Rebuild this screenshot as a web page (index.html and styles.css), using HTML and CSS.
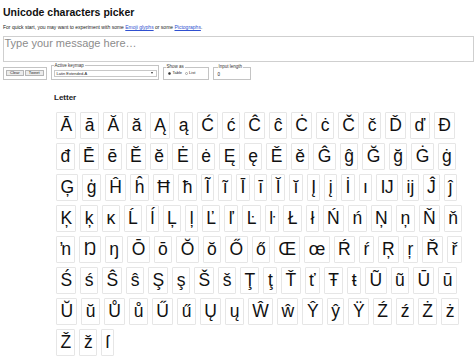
FILE: index.html
```html
<!DOCTYPE html>
<html lang="en">
<head>
<meta charset="utf-8">
<title>Unicode characters picker</title>
<link rel="stylesheet" href="styles.css">
</head>
<body>
<header class="intro">
  <h1 class="title">Unicode characters picker</h1>
  <p class="lead">For quick start, you may want to experiment with some <a href="#">Emoji glyphs</a> or some <a href="#">Pictographs</a>.</p>
</header>
<textarea class="message" placeholder="Type your message here…"></textarea>
<form class="controls">
  <fieldset class="group actions">
    <button type="button" class="btn">Clear</button><button type="button" class="btn">Tweet</button>
  </fieldset>
  <fieldset class="group keymap">
    <legend>Active keymap</legend>
    <div class="select"><span>Latin Extended-A</span><span class="arrow"></span></div>
  </fieldset>
  <fieldset class="group view">
    <legend>Show as</legend>
    <label class="opt"><input type="radio" name="view" checked>Table</label>
    <label class="opt"><input type="radio" name="view">List</label>
  </fieldset>
  <fieldset class="group length">
    <legend>Input length</legend>
    <span class="count">0</span>
  </fieldset>
</form>
<section class="category">
  <h2 class="cat-title">Letter</h2>
  <div class="chars">
    <div class="row"><span class="char">Ā</span><span class="char">ā</span><span class="char">Ă</span><span class="char">ă</span><span class="char">Ą</span><span class="char">ą</span><span class="char">Ć</span><span class="char">ć</span><span class="char">Ĉ</span><span class="char">ĉ</span><span class="char">Ċ</span><span class="char">ċ</span><span class="char">Č</span><span class="char">č</span><span class="char">Ď</span><span class="char">ď</span><span class="char">Đ</span></div>
    <div class="row"><span class="char">đ</span><span class="char">Ē</span><span class="char">ē</span><span class="char">Ĕ</span><span class="char">ĕ</span><span class="char">Ė</span><span class="char">ė</span><span class="char">Ę</span><span class="char">ę</span><span class="char">Ě</span><span class="char">ě</span><span class="char">Ĝ</span><span class="char">ĝ</span><span class="char">Ğ</span><span class="char">ğ</span><span class="char">Ġ</span><span class="char">ġ</span></div>
    <div class="row"><span class="char">Ģ</span><span class="char">ģ</span><span class="char">Ĥ</span><span class="char">ĥ</span><span class="char">Ħ</span><span class="char">ħ</span><span class="char">Ĩ</span><span class="char">ĩ</span><span class="char">Ī</span><span class="char">ī</span><span class="char">Ĭ</span><span class="char">ĭ</span><span class="char">Į</span><span class="char">į</span><span class="char">İ</span><span class="char">ı</span><span class="char">Ĳ</span><span class="char">ĳ</span><span class="char">Ĵ</span><span class="char">ĵ</span></div>
    <div class="row"><span class="char">Ķ</span><span class="char">ķ</span><span class="char">ĸ</span><span class="char">Ĺ</span><span class="char">ĺ</span><span class="char">Ļ</span><span class="char">ļ</span><span class="char">Ľ</span><span class="char">ľ</span><span class="char">Ŀ</span><span class="char">ŀ</span><span class="char">Ł</span><span class="char">ł</span><span class="char">Ń</span><span class="char">ń</span><span class="char">Ņ</span><span class="char">ņ</span><span class="char">Ň</span><span class="char">ň</span></div>
    <div class="row"><span class="char">ŉ</span><span class="char">Ŋ</span><span class="char">ŋ</span><span class="char">Ō</span><span class="char">ō</span><span class="char">Ŏ</span><span class="char">ŏ</span><span class="char">Ő</span><span class="char">ő</span><span class="char">Œ</span><span class="char">œ</span><span class="char">Ŕ</span><span class="char">ŕ</span><span class="char">Ŗ</span><span class="char">ŗ</span><span class="char">Ř</span><span class="char">ř</span></div>
    <div class="row"><span class="char">Ś</span><span class="char">ś</span><span class="char">Ŝ</span><span class="char">ŝ</span><span class="char">Ş</span><span class="char">ş</span><span class="char">Š</span><span class="char">š</span><span class="char">Ţ</span><span class="char">ţ</span><span class="char">Ť</span><span class="char">ť</span><span class="char">Ŧ</span><span class="char">ŧ</span><span class="char">Ũ</span><span class="char">ũ</span><span class="char">Ū</span><span class="char">ū</span></div>
    <div class="row"><span class="char">Ŭ</span><span class="char">ŭ</span><span class="char">Ů</span><span class="char">ů</span><span class="char">Ű</span><span class="char">ű</span><span class="char">Ų</span><span class="char">ų</span><span class="char">Ŵ</span><span class="char">ŵ</span><span class="char">Ŷ</span><span class="char">ŷ</span><span class="char">Ÿ</span><span class="char">Ź</span><span class="char">ź</span><span class="char">Ż</span><span class="char">ż</span></div>
    <div class="row"><span class="char">Ž</span><span class="char">ž</span><span class="char">ſ</span></div>
  </div>
</section>
</body>
</html>
```

FILE: styles.css
```css
* {
  box-sizing: border-box;
}

html,
body {
  margin: 0;
  background: #ffffff;
}

body {
  padding: 0 0 0 3px;
  font-family: "Liberation Sans", Arial, sans-serif;
  font-size: 5px;
  color: #222222;
  overflow: hidden;
}

.title {
  margin: 6px 0 0;
  font-size: 10.5px;
  line-height: 12px;
  font-weight: bold;
  color: #111111;
}

.lead {
  margin: 6px 0 0;
  font-size: 5px;
  line-height: 6px;
  color: #222222;
}

.lead a {
  color: #3050d0;
}

.message {
  display: block;
  width: 100%;
  height: 26px;
  margin: 6px 0 0 -0.5px;
  padding: 0 1px;
  border: 1px solid #cfcfcf;
  font-family: "Liberation Sans", Arial, sans-serif;
  font-size: 11px;
  line-height: 12.6px;
  resize: none;
  color: #222222;
  background: #ffffff;
}

.message::placeholder {
  color: #8c8c8c;
}

.controls {
  display: flex;
  align-items: flex-end;
  gap: 4px;
  margin: 0.5px 0 0;
}

.group {
  margin: 0;
  min-width: 0;
  border: 1px solid #c4c4c4;
  padding: 1px 2px 2px;
}

.group legend {
  padding: 0 1px;
  font-size: 4.5px;
  line-height: 6px;
  color: #333333;
}

.actions {
  display: flex;
  gap: 1.3px;
  padding: 2.5px 2px;
}

.btn {
  height: 6px;
  margin: 0;
  padding: 0 3px;
  border: 1px solid #b5b5b5;
  border-radius: 0.5px;
  background: #ececec;
  font-family: "Liberation Sans", Arial, sans-serif;
  font-size: 4px;
  line-height: 4px;
  color: #222222;
}

.keymap {
  width: 108px;
  padding: 1px 1px 2px 2px;
}

.select {
  display: flex;
  align-items: center;
  justify-content: space-between;
  height: 7px;
  padding: 0 2.5px 0 2px;
  border: 1px solid #c8c8c8;
  background: #ffffff;
  font-size: 4px;
  color: #222222;
}

.arrow {
  width: 0;
  height: 0;
  border-top: 2px solid #333333;
  border-left: 1.2px solid transparent;
  border-right: 1.2px solid transparent;
}

.view {
  display: flex;
  align-items: center;
  width: 46px;
  height: 15.5px;
  padding: 0 2px 2px 2px;
}

.opt {
  display: flex;
  align-items: center;
  gap: 1.5px;
  font-size: 4px;
  line-height: 6px;
  color: #222222;
}

.opt input {
  appearance: none;
  width: 3px;
  height: 3px;
  margin: 0 0 0 2.5px;
  border: 0.5px solid #a8a8a8;
  border-radius: 50%;
  background: #ffffff;
}

.opt input:checked {
  border-color: #555555;
  background: #333333;
}

.length {
  width: 38px;
  height: 15.5px;
  padding: 0 4px 2px;
}

.length legend {
  margin: 0;
}

.count {
  display: block;
  padding: 1.5px 0 0;
  font-size: 4.5px;
  line-height: 5px;
  color: #222222;
}

.category {
  margin: 13.5px 0 0 51px;
}

.cat-title {
  margin: 0 0 7.3px;
  font-size: 8px;
  line-height: 9.2px;
  font-weight: bold;
  color: #222222;
}

.chars {
  display: flex;
  flex-direction: column;
}

.row {
  display: flex;
}

.char {
  display: block;
  height: 27px;
  margin: 2px;
  padding: 0 3.4px;
  border: 1px solid #e6e6e6;
  border-radius: 1px;
  background: #ffffff;
  font-size: 17.5px;
  line-height: 25px;
  color: #111111;
}
```
